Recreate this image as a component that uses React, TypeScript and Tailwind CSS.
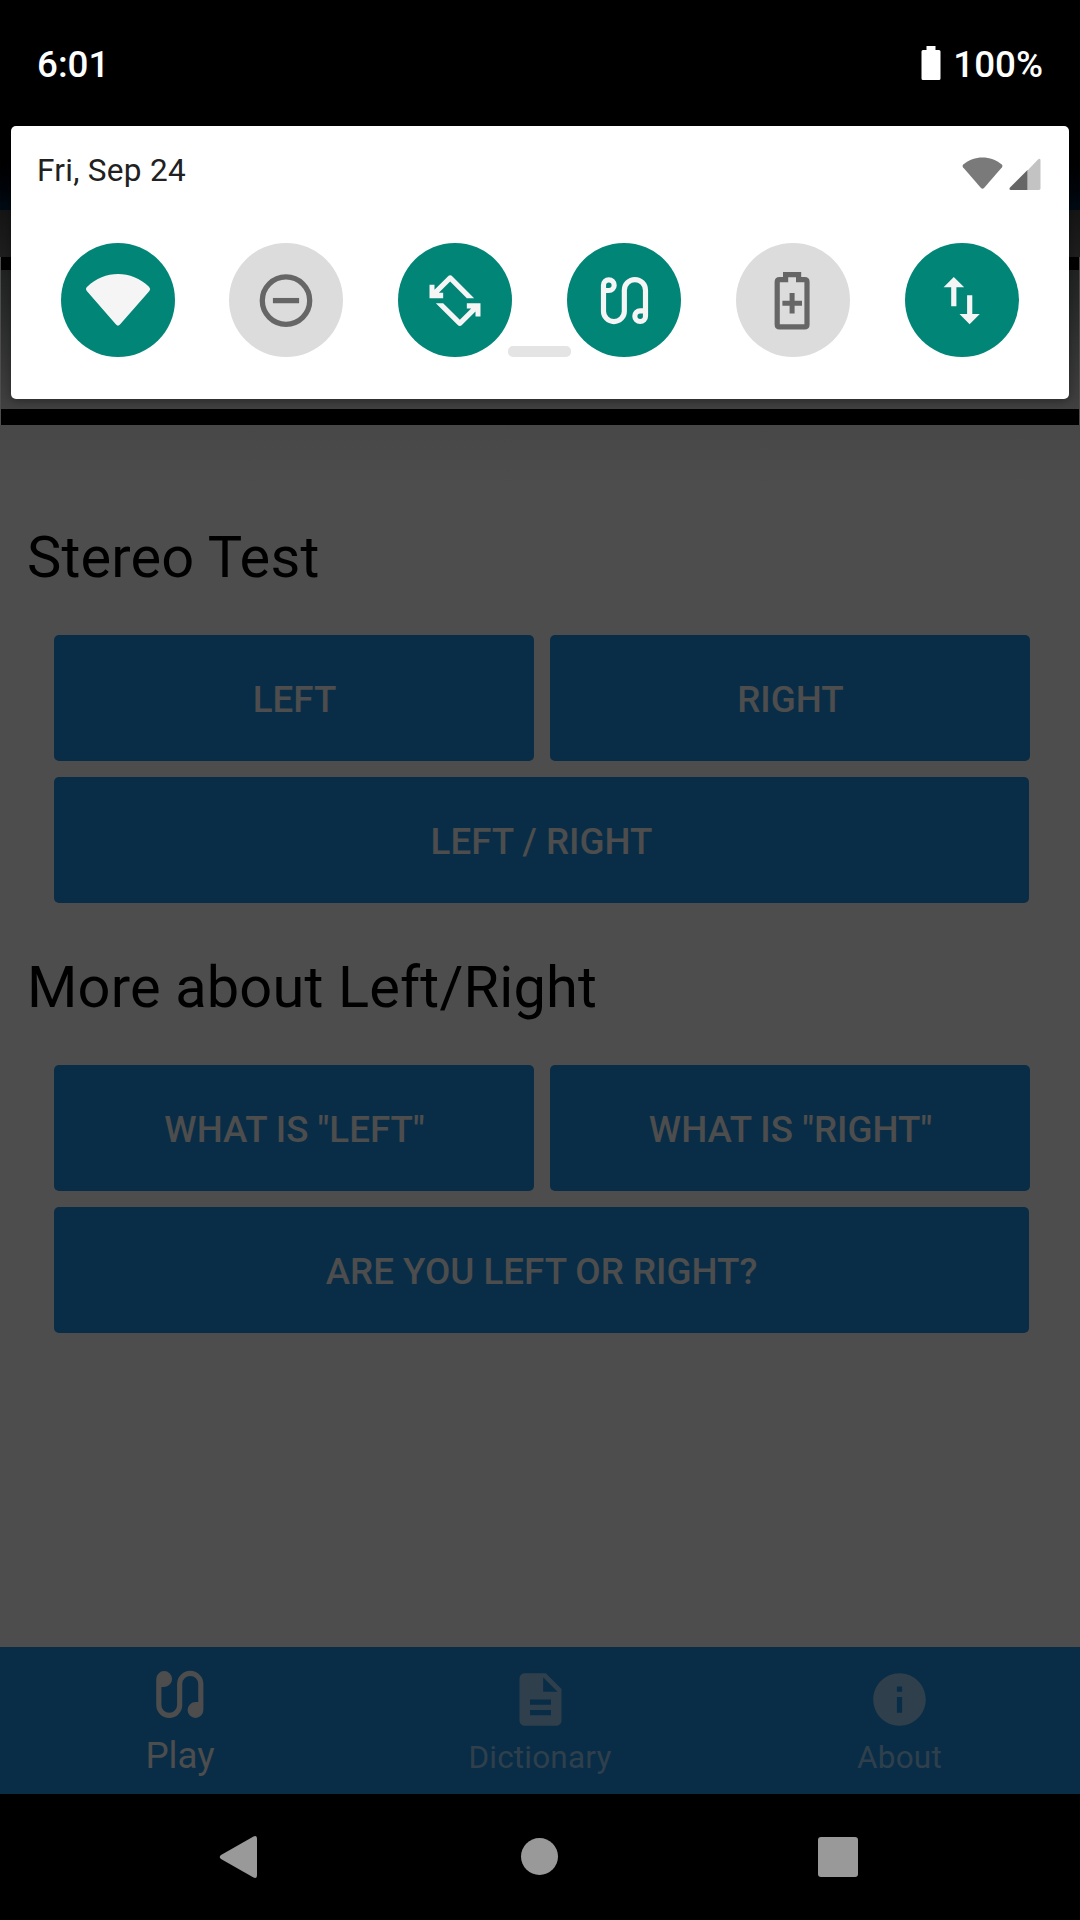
import type { ReactNode } from "react";
import { MdDescription, MdInfo } from "react-icons/md";

const CABLE =
  "M581 181 V165 a16 16 0 1 1 16 16 H581 V243 a31.25 31.25 0 0 0 62.5 0 V180 a31.75 31.75 0 0 1 63.5 0 V258 a16 16 0 1 1 -16 -16 H707";
const ROTATE_ARROW =
  "M59 164 H74 V179 L114 139 Q121 132 128 139 L193 204 H171 L121 154 L87 188 H100 V204 H59 Z";

function ActionButton({ children, className = "" }: { children: ReactNode; className?: string }) {
  return (
    <button
      className={`flex h-[126px] items-center justify-center rounded-[5px] bg-[#0a2d47] pt-[4px] text-[36.75px] leading-none font-medium text-[#4d4d4d] ${className}`}
    >
      {children}
    </button>
  );
}

function Section({ title, left, right, wide }: { title: string; left: string; right: string; wide: string }) {
  return (
    <section className="flex flex-col">
      <h2 className="pl-[27px] text-[57.75px] leading-[68px] tracking-[0.17px] whitespace-nowrap text-black">
        {title}
      </h2>
      <div className="mt-11 flex flex-col gap-4 pr-[50px] pl-[54px]">
        <div className="grid grid-cols-2 gap-4">
          <ActionButton className="pl-px">{left}</ActionButton>
          <ActionButton className="pl-px">{right}</ActionButton>
        </div>
        <ActionButton className="mr-px">{wide}</ActionButton>
      </div>
    </section>
  );
}

function Tile({
  active = false,
  className = "",
  children,
}: {
  active?: boolean;
  className?: string;
  children: ReactNode;
}) {
  return (
    <div
      className={`flex size-[114px] shrink-0 items-center justify-center rounded-full ${
        active ? "bg-[#018577] text-[#f5f5f5]" : "bg-[#dcdcdc] text-[#666]"
      } ${className}`}
    >
      {children}
    </div>
  );
}

function TileIcon({ children }: { children: ReactNode }) {
  return (
    <svg viewBox="-57 -57 114 114" className="size-[114px]" fill="none">
      {children}
    </svg>
  );
}

function QuickTiles() {
  return (
    <div className="flex gap-[55px] pl-[50px]">
      <Tile active className="-mr-px">
        <TileIcon>
          <path
            d="M-30.8 -13.2 C-13.5 -30.3 13.5 -30.3 31 -13.2 Q33 -11.2 31.4 -9 L2 24.5 Q0 26.8 -2 24.5 L-31.2 -9 Q-33 -11.2 -30.8 -13.2Z"
            fill="currentColor"
          />
        </TileIcon>
      </Tile>
      <Tile>
        <TileIcon>
          <circle cx="0" cy="0.6" r="23.7" stroke="currentColor" strokeWidth="5.3" />
          <path d="M-13.1 0.6 H13.1" stroke="currentColor" strokeWidth="5.3" />
        </TileIcon>
      </Tile>
      <Tile active>
        <svg viewBox="-35.5 38.5 342 342" className="size-[114px]" fill="currentColor">
          <path d={ROTATE_ARROW} />
          <path d={ROTATE_ARROW} transform="rotate(180 135.5 211.5)" />
        </svg>
      </Tile>
      <Tile active>
        <svg viewBox="471.5 38.5 342 342" className="size-[114px]" fill="none">
          <path d={CABLE} stroke="currentColor" strokeWidth="15.5" />
        </svg>
      </Tile>
      <Tile>
        <TileIcon>
          <path
            d="M-7.4 -25.3 H5.6 V-20.3 H11.6 Q14 -20.3 14 -17.9 V24.4 Q14 26.8 11.6 26.8 H-13.4 Q-15.8 26.8 -15.8 24.4 V-17.9 Q-15.8 -20.3 -13.4 -20.3 H-7.4 Z"
            stroke="currentColor"
            strokeWidth="5.2"
          />
          <path d="M-10.6 3.2 H9 M-0.9 -7 V13.5" stroke="currentColor" strokeWidth="5" />
        </TileIcon>
      </Tile>
      <Tile active>
        <TileIcon>
          <path
            d="M-8.2 -23 L2.2 -12.7 H-5.6 V6.2 H-10.8 V-12.7 H-18.4 Z M7.6 24.2 L-2.5 14 H5.1 V-4.8 H10.3 V14 H17.8 Z"
            fill="currentColor"
          />
        </TileIcon>
      </Tile>
    </div>
  );
}

function NotificationShade() {
  return (
    <div className="absolute top-[126px] right-[11px] left-[11px] h-[273px] rounded-[5px] bg-white shadow-[0_2px_10px_rgba(0,0,0,0.35)]">
      <div className="flex h-[117px] items-start justify-between pr-[28px] pl-[26px]">
        <span className="pt-[26px] text-[31.5px] leading-[37px] tracking-[0.3px] text-[#212121]">Fri, Sep 24</span>
        <div className="flex items-start gap-[6px] pt-[31px]">
          <svg width="41" height="34" viewBox="0 0 41 34" fill="#7a7a7a">
            <path d="M1.2 7.6 C12 -1.8 29 -1.8 39.8 7.6 Q41 8.8 40 10.2 L22 31 Q20.5 32.6 19 31 L1 10.2 Q0 8.8 1.2 7.6Z" />
          </svg>
          <svg width="32" height="34" viewBox="0 0 32 34">
            <path d="M18.5 13.5 L28.5 3 Q31.5 .5 31.5 3.5 V31.2 Q31.5 33 29.8 33 H18.5Z" fill="#c3c3c3" />
            <path d="M18.5 13 V33 H2 Q-.5 33 1 30.5Z" fill="#666" />
          </svg>
        </div>
      </div>
      <QuickTiles />
      <div className="absolute top-[220px] left-[497px] h-[11px] w-[63px] rounded-[5px] bg-[#e4e4e4]" />
    </div>
  );
}

function StatusBar() {
  return (
    <header className="absolute inset-x-0 top-0 flex h-[126px] justify-between bg-black pr-[37px] pl-[37px] text-[36.75px] leading-[43px] font-medium text-white">
      <span className="pt-[43px]">6:01</span>
      <div className="flex gap-[12px]">
        <svg width="20" height="34" viewBox="0 0 20 34" className="mt-[46px]" fill="white">
          <path d="M5.5 0 H14.5 V4 H18 Q19.5 4 19.5 5.5 V32.5 Q19.5 34 18 34 H2 Q.5 34 .5 32.5 V5.5 Q.5 4 2 4 H5.5Z" />
        </svg>
        <span className="pt-[43px]">100%</span>
      </div>
    </header>
  );
}

function TabBar() {
  return (
    <nav className="grid h-[147px] grid-cols-3 bg-[#0a2d47] text-[#2f404c]">
      <div className="flex flex-col items-center pt-[16px] text-[#4d4d4d]">
        <svg viewBox="551.5 117 189 189" className="size-[63px]" fill="none">
          <path d={CABLE} stroke="currentColor" strokeWidth="15.5" />
          <circle cx="597" cy="165" r="20" fill="currentColor" />
          <circle cx="691" cy="258" r="20" fill="currentColor" />
        </svg>
        <span className="mt-[8px] text-[36.75px] leading-[43px]">Play</span>
      </div>
      <div className="flex flex-col items-center pt-[21px]">
        <MdDescription className="size-[63px]" />
        <span className="mt-[8px] text-[31.5px] leading-[37px] tracking-[0.2px]">Dictionary</span>
      </div>
      <div className="flex flex-col items-center pt-[21px]">
        <MdInfo className="mr-px size-[63px]" />
        <span className="mt-[8px] mr-px text-[31.5px] leading-[37px] tracking-[0.2px]">About</span>
      </div>
    </nav>
  );
}

function SystemNav() {
  return (
    <footer className="flex h-[126px] items-center justify-between bg-black pr-[222px] pl-[219px]">
      <svg width="38" height="42" viewBox="0 0 38 42" fill="#999">
        <path d="M34.5 .5 Q38 -1 38 3 V39 Q38 43 34.5 41.5 L2 23 Q-.5 21 2 19Z" />
      </svg>
      <div className="mb-px ml-[3px] size-[37px] rounded-full bg-[#999]" />
      <div className="size-10 rounded-[3px] bg-[#999]" />
    </footer>
  );
}

export default function App() {
  return (
    <div className="relative flex h-[1920px] w-[1080px] flex-col overflow-hidden bg-[#4d4d4d] font-['Roboto',sans-serif]">
      <div className="h-[210px] shrink-0 bg-linear-to-b from-black from-60% to-[#010b14]" />
      <div className="h-[47px] shrink-0 bg-linear-to-b from-[#151515] to-[#1e1e1e]" />
      <div className="mx-px h-[13px] shrink-0 bg-black" />
      <div className="mx-px h-[139px] shrink-0 bg-linear-to-b from-[#212222] to-[#414141]" />
      <div className="mx-px h-4 shrink-0 bg-black" />
      <main className="flex flex-1 flex-col gap-[50px] bg-linear-to-b from-[#474747] to-[#4d4d4d] to-[60px] pt-[98px]">
        <Section title="Stereo Test" left="LEFT" right="RIGHT" wide="LEFT / RIGHT" />
        <Section
          title="More about Left/Right"
          left={'WHAT IS "LEFT"'}
          right={'WHAT IS "RIGHT"'}
          wide="ARE YOU LEFT OR RIGHT?"
        />
      </main>
      <TabBar />
      <SystemNav />
      <StatusBar />
      <NotificationShade />
    </div>
  );
}
